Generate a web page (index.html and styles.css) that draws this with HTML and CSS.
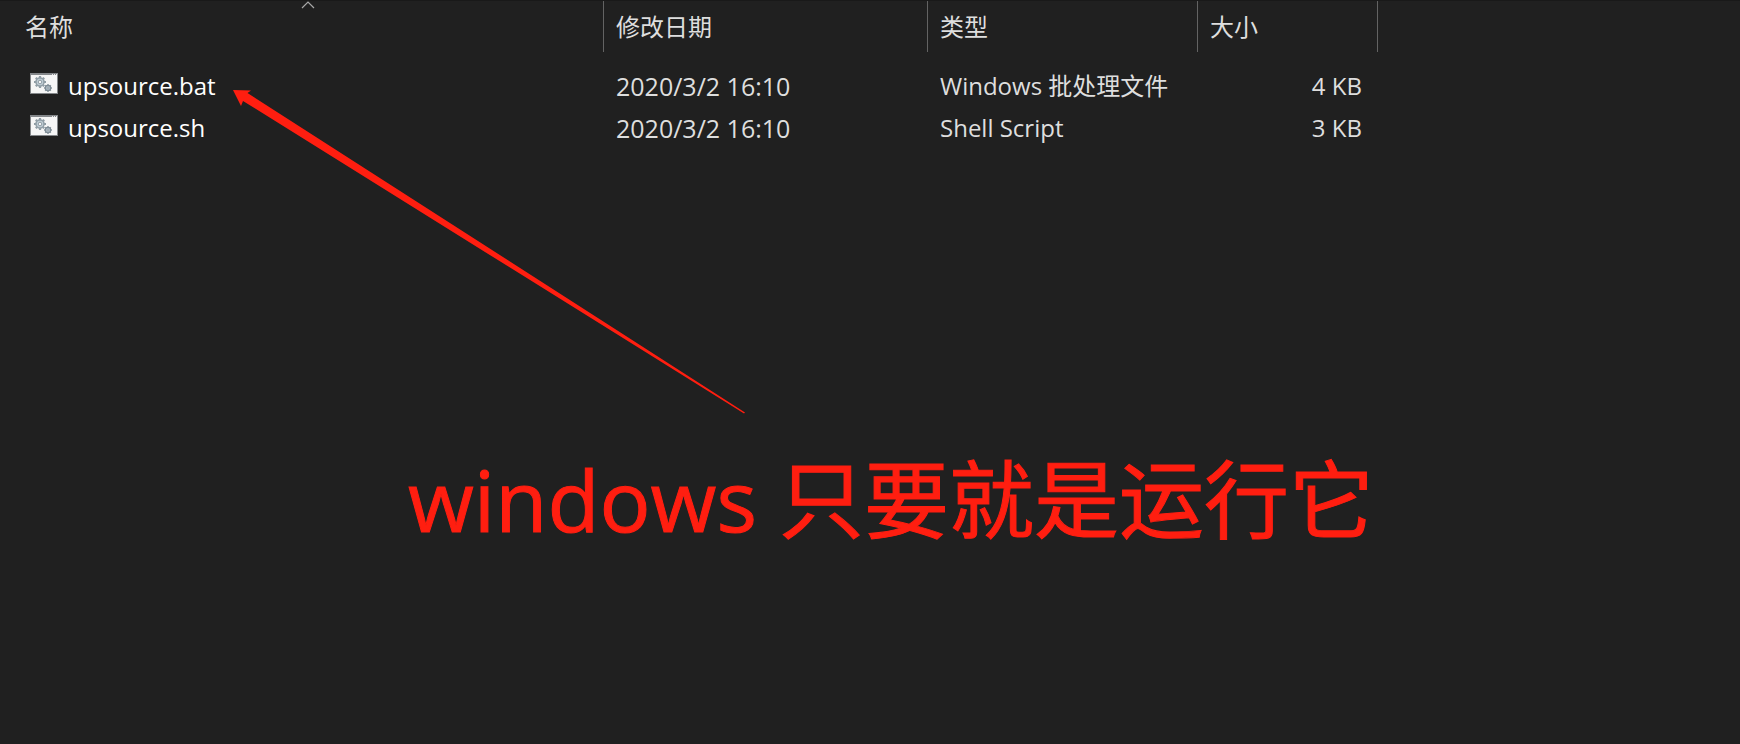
FILE: index.html
```html
<!DOCTYPE html>
<html lang="zh-CN">
<head>
  <meta charset="UTF-8" />
  <meta name="viewport" content="width=device-width, initial-scale=1.0"/>
  <title>upsource</title>
  <link rel="stylesheet" href="styles.css">
</head>
<body>

  <!-- Shared file icon: window with two gears -->
  <svg class="sprite" aria-hidden="true">
    <symbol id="scriptIcon" viewBox="0 0 28 21">
      <rect width="28" height="21" fill="#84878a"/>
      <rect x="1" y="2" width="26" height="18" fill="#f6f6f6"/>
      <path d="M22 1.5h1M24 1.5h1M26 1.5h1" stroke="#e8e8e8" stroke-width="1"/>
      <path d="M10 3v12M4 9h12M5.8 4.8l8.4 8.4M14.2 4.8l-8.4 8.4" stroke="#8f9ca4" stroke-width="2.2"/>
      <circle cx="10" cy="9" r="3.7" fill="none" stroke="#93a0a8" stroke-width="2.2"/>
      <circle cx="10" cy="9" r="3.2" fill="#c3d0d8"/>
      <circle cx="10" cy="9" r="1.8" fill="#f6f6f6" stroke="#8f9ca4" stroke-width="1"/>
      <path d="M18 11v8M14 15h8M15.2 12.2l5.6 5.6M20.8 12.2l-5.6 5.6" stroke="#8f9ca4" stroke-width="1.5"/>
      <circle cx="18" cy="15" r="2.7" fill="#b4c2cb" stroke="#7f8c95" stroke-width="1.2"/>
      <circle cx="18" cy="15" r="1" fill="#f0f0f0" stroke="#7f8c95" stroke-width=".8"/>
    </symbol>
  </svg>

  <!-- File list -->
  <main class="explorer">
    <table class="file-list">
      <colgroup>
        <col class="col-name">
        <col class="col-date">
        <col class="col-type">
        <col class="col-size">
      </colgroup>
      <thead>
        <tr>
          <th class="name" aria-sort="ascending">
            <button type="button">名称</button>
            <svg class="sort" viewBox="0 0 14 8" aria-hidden="true"><path d="M1 7L7 1L13 7" fill="none" stroke="#a8a8a8" stroke-width="1.2"/></svg>
          </th>
          <th><button type="button">修改日期</button></th>
          <th><button type="button">类型</button></th>
          <th><button type="button">大小</button></th>
        </tr>
      </thead>
      <tbody>
        <tr>
          <td class="name"><div class="file"><svg class="icon" aria-hidden="true"><use href="#scriptIcon"/></svg>upsource.bat</div></td>
          <td class="date">2020/3/2 16:10</td>
          <td>Windows 批处理文件</td>
          <td class="size">4 KB</td>
        </tr>
        <tr>
          <td class="name"><div class="file"><svg class="icon" aria-hidden="true"><use href="#scriptIcon"/></svg>upsource.sh</div></td>
          <td class="date">2020/3/2 16:10</td>
          <td>Shell Script</td>
          <td class="size">3 KB</td>
        </tr>
      </tbody>
    </table>

    <!-- Annotation drawn over the list -->
    <svg class="arrow" viewBox="0 0 514 324" aria-hidden="true">
      <path d="M0 0L18 0.5L14.5 3L512 322.4L511 323.6L10 11L8 16Z" fill="#ff1e10"/>
    </svg>
    <p class="note">windows 只要就是运行它</p>
  </main>

</body>
</html>
```

FILE: styles.css
```css
* { box-sizing: border-box; margin: 0; padding: 0; }

body {
  min-height: 100vh;
  background: #202020;
  color: #dedede;
  font-family: "Open Sans", "Noto Sans CJK SC", sans-serif;
  font-size: 24px;
  line-height: 42px;
}

.sprite {
  display: none;
}

.explorer {
  position: relative;
  min-height: 100vh;
  border-top: 1px solid #191919;
}

/* File list */
.file-list {
  table-layout: fixed;
  width: 1378px;
  border-collapse: separate;
  border-spacing: 0;
}

.col-name { width: 604px; }
.col-date { width: 324px; }
.col-type { width: 270px; }
.col-size { width: 180px; }

th {
  position: relative;
  height: 51px;
  padding-left: 12px;
  border-right: 1px solid #636363;
  text-align: left;
  font-weight: normal;
}

th button {
  display: block;
  width: 100%;
  height: 51px;
  border: none;
  background: none;
  color: inherit;
  font: inherit;
  text-align: left;
  cursor: pointer;
}

th.name {
  padding-left: 25px;
}

.sort {
  position: absolute;
  top: 0;
  left: 301px;
  width: 14px;
  height: 8px;
}

tbody::before {
  content: "";
  display: block;
  height: 13px;
}

td {
  height: 42px;
  padding-left: 12px;
  white-space: nowrap;
}

td.name {
  padding-left: 30px;
  color: #fff;
}

td.date {
  font-size: 25px;
}

td.size {
  padding-right: 16px;
  text-align: right;
}

.file {
  display: flex;
  gap: 10px;
}

.icon {
  width: 28px;
  height: 21px;
  margin-top: 8px;
}

/* Annotation */
.arrow {
  position: absolute;
  top: 89px;
  left: 233px;
  width: 514px;
  height: 324px;
}

.note {
  position: absolute;
  top: 438px;
  left: 408px;
  color: #ff1e10;
  font-size: 85px;
  line-height: 120px;
  white-space: nowrap;
  -webkit-text-stroke: 1px #ff1e10;
}
```
